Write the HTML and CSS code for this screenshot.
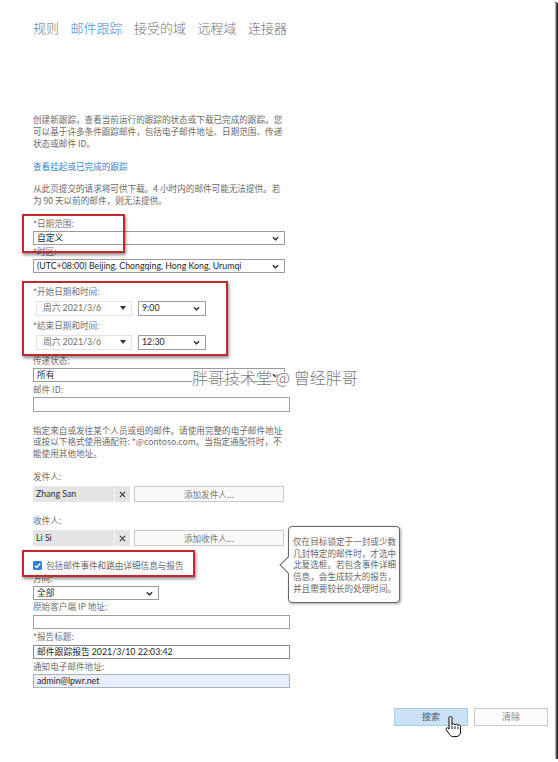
FILE: index.html
```html
<!DOCTYPE html>
<html lang="zh-CN">
<head>
<meta charset="utf-8">
<title>邮件跟踪</title>
<link rel="stylesheet" href="styles.css">
</head>
<body>
<div class="frame">
  <nav class="tabs">
    <span class="tab">规则</span>
    <span class="tab active">邮件跟踪</span>
    <span class="tab">接受的域</span>
    <span class="tab">远程域</span>
    <span class="tab">连接器</span>
  </nav>

  <main class="form">
    <p class="intro">创建新跟踪，查看当前运行的跟踪的状态或下载已完成的跟踪。您<br>可以基于许多条件跟踪邮件，包括电子邮件地址、日期范围、传递<br>状态或邮件 ID。</p>
    <a class="link">查看挂起或已完成的跟踪</a>
    <p class="note">从此页提交的请求将可供下载。4 小时内的邮件可能无法提供。若<br>为 90 天以前的邮件，则无法提供。</p>

    <div class="field f-range">
      <div class="label">*日期范围:</div>
      <div class="select wide"><span class="val">自定义</span><svg class="chev" viewBox="0 0 8 5"><polyline points="1,1 4,4 7,1"/></svg></div>
    </div>
    <div class="field f-tz">
      <div class="label">*时区:</div>
      <div class="select wide"><span class="val latin">(UTC+08:00) Beijing, Chongqing, Hong Kong, Urumqi</span><svg class="chev" viewBox="0 0 8 5"><polyline points="1,1 4,4 7,1"/></svg></div>
    </div>

    <div class="field f-start">
      <div class="label">*开始日期和时间:</div>
      <div class="dt-row">
        <div class="date"><span class="val">周六 <span class="latin">2021/3/6</span></span><span class="tri"></span></div>
        <div class="select time"><span class="val latin">9:00</span><svg class="chev" viewBox="0 0 8 5"><polyline points="1,1 4,4 7,1"/></svg></div>
      </div>
    </div>
    <div class="field f-end">
      <div class="label">*结束日期和时间:</div>
      <div class="dt-row">
        <div class="date"><span class="val">周六 <span class="latin">2021/3/6</span></span><span class="tri"></span></div>
        <div class="select time"><span class="val latin">12:30</span><svg class="chev" viewBox="0 0 8 5"><polyline points="1,1 4,4 7,1"/></svg></div>
      </div>
    </div>

    <div class="field f-status">
      <div class="label">传递状态:</div>
      <div class="select wide"><span class="val">所有</span><svg class="chev" viewBox="0 0 8 5"><polyline points="1,1 4,4 7,1"/></svg></div>
    </div>
    <div class="field f-id">
      <div class="label">邮件 ID:</div>
      <div class="input"></div>
    </div>

    <p class="note2">指定来自或发往某个人员或组的邮件。请使用完整的电子邮件地址<br>或按以下格式使用通配符: *@contoso.com。当指定通配符时，不<br>能使用其他地址。</p>

    <div class="field f-from">
      <div class="label">发件人:</div>
      <div class="people-row">
        <div class="chip"><span class="chip-name latin">Zhang San</span><span class="chip-x"><svg viewBox="0 0 8 8"><path d="M1 1L7 7M7 1L1 7"/></svg></span></div>
        <div class="add-btn">添加发件人...</div>
      </div>
    </div>
    <div class="field f-to">
      <div class="label">收件人:</div>
      <div class="people-row">
        <div class="chip"><span class="chip-name latin">Li Si</span><span class="chip-x"><svg viewBox="0 0 8 8"><path d="M1 1L7 7M7 1L1 7"/></svg></span></div>
        <div class="add-btn">添加收件人...</div>
      </div>
    </div>

    <div class="check-row">
      <span class="checkbox"><svg viewBox="0 0 10 10"><polyline points="2,5.2 4.2,7.3 8,2.8"/></svg></span>
      <span class="check-text">包括邮件事件和路由详细信息与报告</span>
    </div>

    <div class="field f-dir">
      <div class="label">方向:</div>
      <div class="select dir"><span class="val">全部</span><svg class="chev" viewBox="0 0 8 5"><polyline points="1,1 4,4 7,1"/></svg></div>
    </div>
    <div class="field f-ip">
      <div class="label">原始客户端 IP 地址:</div>
      <div class="input"></div>
    </div>
    <div class="field f-title">
      <div class="label">*报告标题:</div>
      <div class="input dark"><span class="val">邮件跟踪报告 <span class="latin">2021/3/10 22:03:42</span></span></div>
    </div>
    <div class="field f-mail">
      <div class="label">通知电子邮件地址:</div>
      <div class="input filled"><span class="val latin">admin@lpwr.net</span></div>
    </div>

    <div class="actions">
      <button class="btn primary">搜索</button>
      <button class="btn">清除</button>
    </div>
  </main>

  <div class="redbox rb1"></div>
  <div class="redbox rb2"></div>
  <div class="redbox rb3"></div>

  <div class="tooltip">仅在目标锁定于一封或少数<br>几封特定的邮件时，才选中<br>此复选框。若包含事件详细<br>信息，会生成较大的报告，<br>并且需要较长的处理时间。</div>

  <div class="watermark">胖哥技术堂 @ 曾经胖哥</div>

  <svg class="cursor" viewBox="0 0 16 23">
    <path d="M5.5 1.5c.8 0 1.5.6 1.5 1.4V9.6c.3-.6.9-.9 1.5-.9.8 0 1.4.6 1.5 1.3.3-.5.8-.8 1.4-.8.8 0 1.4.6 1.5 1.4.3-.4.7-.6 1.2-.6.8 0 1.5.7 1.5 1.5V17c0 2.6-1.9 4.6-4.5 4.6H8.2c-1.5 0-2.5-.7-3.4-1.8L1.3 15c-.5-.7-.3-1.6.4-2 .6-.4 1.4-.2 1.9.4L4 14.1V2.9c0-.8.7-1.4 1.5-1.4z"/>
    <path class="fl" d="M7 10.5V14M10 11V14M13 11.8V14"/>
  </svg>
</div>
</body>
</html>
```

FILE: styles.css
```css
html, body {
  margin: 0;
  padding: 0;
  background: #fff;
}

body {
  font-family: "Noto Sans CJK SC", "Noto Sans", sans-serif;
  color: #666;
}

.frame {
  position: relative;
  width: 555px;
  height: 759px;
  background: #fff;
  box-shadow: 1px 1px 0 #b0b0b0, 2px 2px 0 #555, 3px 3px 0 #2a2a2a;
  overflow: visible;
}

.latin {
  font-family: "Lato", "Noto Sans CJK SC", sans-serif;
}

/* tabs */
.tabs {
  display: flex;
  gap: 11.5px;
  padding: 20px 0 0 33px;
  font-size: 13px;
  line-height: 16px;
  color: #737373;
  font-weight: 300;
}
.tab.active {
  color: #3c8ccc;
}

/* form */
.form {
  padding-left: 33px;
  font-size: 8.6px;
  line-height: 12px;
}

.intro {
  margin: 77px 0 0;
  line-height: 12px;
  color: #6a6a6a;
}

.link {
  display: block;
  margin-top: 11px;
  color: #3b84c4;
  text-decoration: none;
}

.note {
  margin: 11px 0 0;
  line-height: 11.5px;
  color: #6a6a6a;
}

.note2 {
  margin: 12.5px 0 0;
  line-height: 11.5px;
  color: #6a6a6a;
}

.label {
  line-height: 12px;
  color: #707070;
}

.field { display: block; }
.f-range { margin-top: 11px; }
.f-tz { margin-top: 0; }
.f-start { margin-top: 12px; }
.f-end { margin-top: 3.5px; }
.f-status { margin-top: 4.5px; }
.f-id { margin-top: 1px; }
.f-from { margin-top: 11px; }
.f-to { margin-top: 12px; }
.f-dir { margin-top: 1px; }
.f-ip { margin-top: 0; }
.f-title { margin-top: 1px; }
.f-mail { margin-top: 1px; }

/* select-like boxes */
.select {
  box-sizing: border-box;
  display: flex;
  align-items: center;
  height: 14px;
  margin-top: 2px;
  padding: 0 5px 0 3px;
  border: 1px solid #9b9b9b;
  background: #fff;
  color: #262626;
  font-size: 8.8px;
}
.select .val {
  flex: 1;
  white-space: nowrap;
  overflow: hidden;
}
.select.wide { width: 252px; }
.select.dir { width: 126px; margin-top: 2px; }
.select.time { width: 68px; height: 15px; margin-top: 0; margin-left: 6px; }

.chev {
  width: 7px;
  height: 5px;
  flex: none;
}
.chev polyline {
  fill: none;
  stroke: #2b2b2b;
  stroke-width: 1.6;
}

.dt-row {
  display: flex;
  align-items: center;
  margin-top: 3.5px;
}
.date {
  box-sizing: border-box;
  display: flex;
  align-items: center;
  width: 96px;
  height: 15px;
  margin-left: 3px;
  padding: 0 4px 0 6px;
  border: 1px solid #e2e2e2;
  color: #707070;
  font-size: 8.8px;
}
.date .val { flex: 1; white-space: nowrap; }
.tri {
  width: 0;
  height: 0;
  border-left: 3px solid transparent;
  border-right: 3px solid transparent;
  border-top: 4px solid #333;
  margin-right: 1px;
}

/* inputs */
.input {
  box-sizing: border-box;
  display: flex;
  align-items: center;
  width: 257px;
  height: 14px;
  margin-top: 3px;
  padding-left: 3px;
  border: 1px solid #a0a0a0;
  background: #fff;
  color: #262626;
  font-size: 8.8px;
}
.f-id .input { margin-top: 2px; height: 15px; }
.f-mail .input { margin-top: 2px; }
.input.dark { border-color: #8a8a8a; }
.input.filled {
  background: #e6effb;
  border-color: #a7b3c2;
}

/* people pickers */
.people-row {
  display: flex;
  margin-top: 4px;
  height: 16px;
}
.chip {
  display: flex;
  width: 97px;
  height: 16px;
  background: #e4e4e4;
  color: #2e2e2e;
  font-size: 8.8px;
}
.chip-name {
  flex: 1;
  display: flex;
  align-items: center;
  padding-left: 3px;
}
.chip-x {
  width: 15px;
  display: flex;
  align-items: center;
  justify-content: center;
  border-left: 1px solid #f4f4f4;
}
.chip-x svg {
  width: 7px;
  height: 7px;
}
.chip-x path {
  stroke: #333;
  stroke-width: 1.2;
  fill: none;
}
.add-btn {
  box-sizing: border-box;
  width: 150px;
  height: 16px;
  margin-left: 4px;
  border: 1px solid #c9c9c9;
  background: #f9f9f9;
  color: #7a7a7a;
  text-align: center;
  line-height: 14px;
}

/* checkbox */
.check-row {
  display: flex;
  align-items: center;
  margin-top: 13px;
  height: 12px;
}
.checkbox {
  box-sizing: border-box;
  width: 9px;
  height: 9px;
  border-radius: 1.5px;
  background: #2f7fd3;
  display: flex;
}
.checkbox svg { width: 9px; height: 9px; }
.checkbox polyline {
  fill: none;
  stroke: #fff;
  stroke-width: 1.6;
}
.check-text {
  margin-left: 4px;
  color: #6a6a6a;
}

/* buttons */
.actions {
  display: flex;
  justify-content: flex-end;
  gap: 6px;
  margin-top: 20px;
  padding-right: 7px;
}
.btn {
  box-sizing: border-box;
  width: 74px;
  height: 18px;
  padding: 0;
  border: 1px solid #c8c8c8;
  background: #fbfbfb;
  color: #8a8a8a;
  font-family: "Noto Sans CJK SC", sans-serif;
  font-size: 9px;
  line-height: 16px;
}
.btn.primary {
  background: #c9e2f6;
  border-color: #a9cbe8;
  color: #555;
}

/* annotations */
.redbox {
  position: absolute;
  box-sizing: border-box;
  border: 2.5px solid #c3282d;
  box-shadow: 1px 2px 3px rgba(0, 0, 0, 0.45);
}
.rb1 { left: 22px; top: 214px; width: 103px; height: 39px; }
.rb2 { left: 22px; top: 281px; width: 206px; height: 75px; }
.rb3 { left: 22px; top: 550px; width: 173px; height: 27px; }

.tooltip {
  position: absolute;
  left: 288px;
  top: 526px;
  box-sizing: border-box;
  width: 112px;
  height: 77px;
  padding: 9px 0 0 4px;
  border: 1px solid #666;
  border-radius: 4px;
  background: #fff;
  box-shadow: 1px 1px 3px rgba(0, 0, 0, 0.35);
  font-size: 8.6px;
  line-height: 11.7px;
  color: #6a6a6a;
  white-space: nowrap;
}
.tooltip::before {
  content: "";
  position: absolute;
  left: -7px;
  top: 32px;
  width: 11px;
  height: 11px;
  background: #fff;
  border-left: 1px solid #666;
  border-bottom: 1px solid #666;
  transform: rotate(45deg);
}

.watermark {
  position: absolute;
  left: 192px;
  top: 368px;
  font-size: 16px;
  line-height: 18px;
  font-weight: 300;
  color: #7b7b7b;
  white-space: nowrap;
  text-shadow: 0 0 1px #fff, 0 0 2px #fff, 1px 1px 0 #fff, -1px -1px 0 #fff;
}

.cursor {
  position: absolute;
  left: 445px;
  top: 715px;
  width: 16px;
  height: 23px;
}
.cursor path {
  fill: #fff;
  stroke: #000;
  stroke-width: 1;
  stroke-linejoin: round;
}
.cursor path.fl {
  fill: none;
  stroke-width: 0.9;
}
```
